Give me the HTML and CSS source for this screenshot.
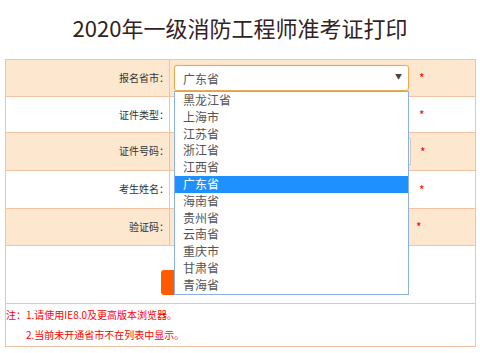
FILE: index.html
```html
<!DOCTYPE html>
<html lang="zh-CN">
<head>
<meta charset="utf-8">
<title>2020年一级消防工程师准考证打印</title>
<link rel="stylesheet" href="styles.css">
</head>
<body>
<h1 class="title">2020年一级消防工程师准考证打印</h1>
<div class="form">
  <div class="row fill">
    <div class="label">报名省市：</div>
    <div class="field">
      <div class="select">
        <span>广东省</span>
        <span class="arrow">▼</span>
        <ul class="dropdown">
          <li>黑龙江省</li>
          <li>上海市</li>
          <li>江苏省</li>
          <li>浙江省</li>
          <li>江西省</li>
          <li class="active">广东省</li>
          <li>海南省</li>
          <li>贵州省</li>
          <li>云南省</li>
          <li>重庆市</li>
          <li>甘肃省</li>
          <li>青海省</li>
        </ul>
      </div>
      <span class="star">*</span>
    </div>
  </div>
  <div class="row r2">
    <div class="label">证件类型：</div>
    <div class="field"><div class="box"></div><span class="star">*</span></div>
  </div>
  <div class="row fill r3">
    <div class="label">证件号码：</div>
    <div class="field"><div class="box wide"></div><span class="star">*</span></div>
  </div>
  <div class="row r4">
    <div class="label">考生姓名：</div>
    <div class="field"><div class="box"></div><span class="star">*</span></div>
  </div>
  <div class="row fill">
    <div class="label">验证码：</div>
    <div class="field"><div class="box narrow"></div><span class="star">*</span></div>
  </div>
  <div class="row btnrow">
    <button class="btn">查询</button>
  </div>
  <div class="notes">
    <p>注：1.请使用IE8.0及更高版本浏览器。</p>
    <p class="indent">2.当前未开通省市不在列表中显示。</p>
  </div>
</div>
</body>
</html>
```
FILE: styles.css
```css
* { box-sizing: border-box; }
body {
  margin: 0;
  background: #fff;
  font-family: "Noto Sans CJK SC", "Noto Sans", sans-serif;
  color: #333;
}
.title {
  margin: 0;
  height: 59px;
  line-height: 55px;
  text-align: center;
  font-size: 22px;
  font-weight: normal;
  color: #332222;
}
.form {
  margin-left: 5px;
  width: 471px;
  border: 1px solid #f1c3a2;
}
.row {
  display: flex;
  height: 37px;
  border-bottom: 1px solid #f1c3a2;
}
.r2 { height: 36px; }
.r3, .r4 { height: 38px; }
.fill { background: #fde8cf; }
.label {
  width: 164px;
  border-right: 1px solid #f1c3a2;
  text-align: right;
  font-size: 10px;
  line-height: 35px;
  padding-right: 0;
  color: #333;
}
.field {
  display: flex;
  align-items: center;
  padding-left: 4px;
  flex: 1;
}
.select {
  position: relative;
  width: 235px;
  height: 26px;
  border: 1px solid #e9aa52;
  border-radius: 3px;
  box-shadow: 0 0 2px #f6cf96;
  background: #fff;
  display: flex;
  align-items: center;
  justify-content: space-between;
  padding: 0 6px 0 8px;
  font-size: 12px;
  color: #555;
}
.arrow {
  font-size: 7px;
  color: #444;
  margin-top: -4px;
}
.dropdown {
  position: absolute;
  left: -1px;
  top: 25px;
  width: 235px;
  margin: 0;
  padding: 0;
  list-style: none;
  background: #fff;
  border: 1px solid #8eb0e0;
  z-index: 5;
}
.dropdown li {
  height: 16.8px;
  line-height: 16.8px;
  padding-left: 8px;
  font-size: 12px;
  color: #555;
}
.dropdown li.active {
  background: #1e90ff;
  color: #fff;
}
.box {
  width: 235px;
  height: 27px;
  border: 1px solid #ccc;
  background: #fff;
}
.box.wide { width: 237px; }
.box.narrow { width: 232px; }
.star {
  margin-left: 10px;
  color: #f00;
  font-size: 12px;
  line-height: 1;
}
.r3 .star { margin-left: 9px; }
.btnrow {
  height: 58px;
  padding-left: 155px;
  padding-top: 24px;
}
.btn {
  width: 160px;
  height: 25px;
  border: none;
  border-radius: 3px;
  background: #ff5a00;
  color: #fff;
  font-family: inherit;
  font-size: 12px;
}
.notes {
  height: 42px;
  padding-top: 1px;
  color: #f00;
  font-size: 10px;
}
.notes p {
  margin: 0;
  height: 20px;
  line-height: 20px;
}
.notes .indent { padding-left: 20px; }
```
